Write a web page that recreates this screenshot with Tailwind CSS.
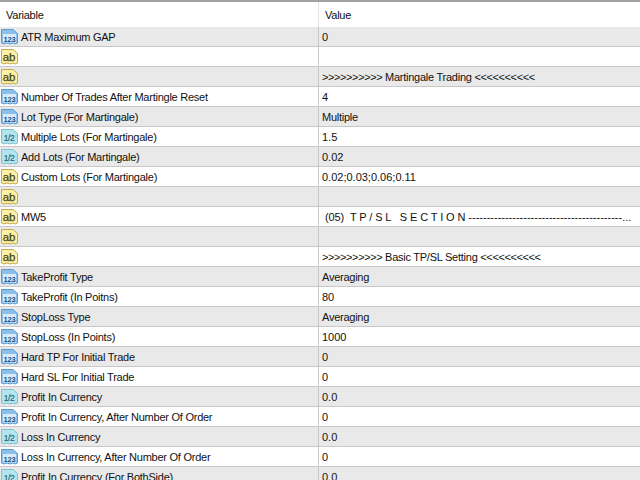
<!DOCTYPE html>
<html lang="en">
<head>
    <meta charset="UTF-8">
    <title>Inputs</title>
    <script src="https://cdn.jsdelivr.net/npm/@tailwindcss/browser@4"></script>
</head>
<body class="bg-white overflow-hidden">
    <svg class="hidden">
        <symbol id="i123" viewBox="0 0 17 16">
            <path d="M.5 .5 H12 L16.5 4.5 V14 L14 15 L12 14 L9 15 L6 14 L3 15 L.5 14Z" fill="#8cc0ea" stroke="#5b9bd0"/>
            <rect x="2" y="5" width="13" height="8.5" fill="#d8ebfa"/>
            <text x="8.5" y="12.5" text-anchor="middle" font-family="Liberation Sans" font-size="7.5" font-weight="700" fill="#17508c">123</text>
        </symbol>
        <symbol id="iab" viewBox="0 0 17 16">
            <path d="M.5 .5 H12 L16.5 4.5 V14 L14 15 L12 14 L9 15 L6 14 L3 15 L.5 14Z" fill="#fbf0a6" stroke="#c4ab4a"/>
            <text x="8" y="12" text-anchor="middle" font-family="Liberation Sans" font-size="11.5" fill="#4a4208" stroke="#4a4208" stroke-width=".25">ab</text>
        </symbol>
        <symbol id="ifr" viewBox="0 0 17 16">
            <path d="M.5 .5 H12 L16.5 4.5 V14 L14 15 L12 14 L9 15 L6 14 L3 15 L.5 14Z" fill="#b4e4ec" stroke="#7cc3d2"/>
            <text x="8" y="11.5" text-anchor="middle" font-family="Liberation Sans" font-size="8.5" letter-spacing="-.5" fill="#1c6c85" stroke="#1c6c85" stroke-width=".2">1/2</text>
        </symbol>
    </svg>

    <div class="font-['Liberation_Sans',sans-serif] text-[11px] tracking-[-0.25px] leading-[19px] text-[#111] h-[480px] overflow-hidden">
        <!-- Header -->
        <div class="flex h-[27px] border-t-2 border-[#a0a0a0] items-center">
            <div class="w-[319px] pl-[6px] pt-[2px] border-r border-[#e3e3e3] h-full flex items-center">Variable</div>
            <div class="pl-[6px] pt-[2px]">Value</div>
        </div>

        <div class="flex h-5 border-b border-[#c8c8c8] bg-[#e9e9e9]"><div class="w-[319px] flex items-center border-r border-[#c8c8c8]"><svg class="w-[17px] h-4 ml-[1px] mr-[3px]"><use href="#i123"/></svg><span class="pt-[2px]">ATR Maximum GAP</span></div><div class="pl-[3px] pt-px flex-1 tracking-normal">0</div></div>
        <div class="flex h-5 border-b border-[#c8c8c8] bg-white"><div class="w-[319px] flex items-center border-r border-[#c8c8c8]"><svg class="w-[17px] h-4 ml-[1px] mr-[3px]"><use href="#iab"/></svg></div><div class="pl-[3px] pt-px flex-1"></div></div>
        <div class="flex h-5 border-b border-[#c8c8c8] bg-[#e9e9e9]"><div class="w-[319px] flex items-center border-r border-[#c8c8c8]"><svg class="w-[17px] h-4 ml-[1px] mr-[3px]"><use href="#iab"/></svg></div><div class="pl-[3px] pt-px flex-1"><span class="tracking-[-0.4px]">&gt;&gt;&gt;&gt;&gt;&gt;&gt;&gt;&gt;&gt;</span> Martingale Trading <span class="tracking-[-0.4px]">&lt;&lt;&lt;&lt;&lt;&lt;&lt;&lt;&lt;&lt;</span></div></div>
        <div class="flex h-5 border-b border-[#c8c8c8] bg-white"><div class="w-[319px] flex items-center border-r border-[#c8c8c8]"><svg class="w-[17px] h-4 ml-[1px] mr-[3px]"><use href="#i123"/></svg><span class="pt-[2px]">Number Of Trades After Martingle Reset</span></div><div class="pl-[3px] pt-px flex-1 tracking-normal">4</div></div>
        <div class="flex h-5 border-b border-[#c8c8c8] bg-[#e9e9e9]"><div class="w-[319px] flex items-center border-r border-[#c8c8c8]"><svg class="w-[17px] h-4 ml-[1px] mr-[3px]"><use href="#i123"/></svg><span class="pt-[2px]">Lot Type (For Martingale)</span></div><div class="pl-[3px] pt-px flex-1">Multiple</div></div>
        <div class="flex h-5 border-b border-[#c8c8c8] bg-white"><div class="w-[319px] flex items-center border-r border-[#c8c8c8]"><svg class="w-[17px] h-4 ml-[1px] mr-[3px]"><use href="#ifr"/></svg><span class="pt-[2px]">Multiple Lots (For Martingale)</span></div><div class="pl-[3px] pt-px flex-1 tracking-normal">1.5</div></div>
        <div class="flex h-5 border-b border-[#c8c8c8] bg-[#e9e9e9]"><div class="w-[319px] flex items-center border-r border-[#c8c8c8]"><svg class="w-[17px] h-4 ml-[1px] mr-[3px]"><use href="#ifr"/></svg><span class="pt-[2px]">Add Lots (For Martingale)</span></div><div class="pl-[3px] pt-px flex-1 tracking-normal">0.02</div></div>
        <div class="flex h-5 border-b border-[#c8c8c8] bg-white"><div class="w-[319px] flex items-center border-r border-[#c8c8c8]"><svg class="w-[17px] h-4 ml-[1px] mr-[3px]"><use href="#iab"/></svg><span class="pt-[2px]">Custom Lots (For Martingale)</span></div><div class="pl-[3px] pt-px flex-1 tracking-normal">0.02;0.03;0.06;0.11</div></div>
        <div class="flex h-5 border-b border-[#c8c8c8] bg-[#e9e9e9]"><div class="w-[319px] flex items-center border-r border-[#c8c8c8]"><svg class="w-[17px] h-4 ml-[1px] mr-[3px]"><use href="#iab"/></svg></div><div class="pl-[3px] pt-px flex-1"></div></div>
        <div class="flex h-5 border-b border-[#c8c8c8] bg-white"><div class="w-[319px] flex items-center border-r border-[#c8c8c8]"><svg class="w-[17px] h-4 ml-[1px] mr-[3px]"><use href="#iab"/></svg><span class="pt-[2px]">MW5</span></div><div class="pl-[6px] pt-px flex-1 whitespace-pre"><span class="tracking-[-0.1px]">(05)  T P / S L   S E C T I O N </span><span class="tracking-normal">------------------------------------------...</span></div></div>
        <div class="flex h-5 border-b border-[#c8c8c8] bg-[#e9e9e9]"><div class="w-[319px] flex items-center border-r border-[#c8c8c8]"><svg class="w-[17px] h-4 ml-[1px] mr-[3px]"><use href="#iab"/></svg></div><div class="pl-[3px] pt-px flex-1"></div></div>
        <div class="flex h-5 border-b border-[#c8c8c8] bg-white"><div class="w-[319px] flex items-center border-r border-[#c8c8c8]"><svg class="w-[17px] h-4 ml-[1px] mr-[3px]"><use href="#iab"/></svg></div><div class="pl-[3px] pt-px flex-1"><span class="tracking-[-0.4px]">&gt;&gt;&gt;&gt;&gt;&gt;&gt;&gt;&gt;&gt;</span> Basic TP/SL Setting <span class="tracking-[-0.4px]">&lt;&lt;&lt;&lt;&lt;&lt;&lt;&lt;&lt;&lt;</span></div></div>
        <div class="flex h-5 border-b border-[#c8c8c8] bg-[#e9e9e9]"><div class="w-[319px] flex items-center border-r border-[#c8c8c8]"><svg class="w-[17px] h-4 ml-[1px] mr-[3px]"><use href="#i123"/></svg><span class="pt-[2px]">TakeProfit Type</span></div><div class="pl-[3px] pt-px flex-1">Averaging</div></div>
        <div class="flex h-5 border-b border-[#c8c8c8] bg-white"><div class="w-[319px] flex items-center border-r border-[#c8c8c8]"><svg class="w-[17px] h-4 ml-[1px] mr-[3px]"><use href="#i123"/></svg><span class="pt-[2px]">TakeProfit (In Poitns)</span></div><div class="pl-[3px] pt-px flex-1 tracking-normal">80</div></div>
        <div class="flex h-5 border-b border-[#c8c8c8] bg-[#e9e9e9]"><div class="w-[319px] flex items-center border-r border-[#c8c8c8]"><svg class="w-[17px] h-4 ml-[1px] mr-[3px]"><use href="#i123"/></svg><span class="pt-[2px]">StopLoss Type</span></div><div class="pl-[3px] pt-px flex-1">Averaging</div></div>
        <div class="flex h-5 border-b border-[#c8c8c8] bg-white"><div class="w-[319px] flex items-center border-r border-[#c8c8c8]"><svg class="w-[17px] h-4 ml-[1px] mr-[3px]"><use href="#i123"/></svg><span class="pt-[2px]">StopLoss (In Points)</span></div><div class="pl-[3px] pt-px flex-1 tracking-normal">1000</div></div>
        <div class="flex h-5 border-b border-[#c8c8c8] bg-[#e9e9e9]"><div class="w-[319px] flex items-center border-r border-[#c8c8c8]"><svg class="w-[17px] h-4 ml-[1px] mr-[3px]"><use href="#i123"/></svg><span class="pt-[2px]">Hard TP For Initial Trade</span></div><div class="pl-[3px] pt-px flex-1 tracking-normal">0</div></div>
        <div class="flex h-5 border-b border-[#c8c8c8] bg-white"><div class="w-[319px] flex items-center border-r border-[#c8c8c8]"><svg class="w-[17px] h-4 ml-[1px] mr-[3px]"><use href="#i123"/></svg><span class="pt-[2px]">Hard SL For Initial Trade</span></div><div class="pl-[3px] pt-px flex-1 tracking-normal">0</div></div>
        <div class="flex h-5 border-b border-[#c8c8c8] bg-[#e9e9e9]"><div class="w-[319px] flex items-center border-r border-[#c8c8c8]"><svg class="w-[17px] h-4 ml-[1px] mr-[3px]"><use href="#ifr"/></svg><span class="pt-[2px]">Profit In Currency</span></div><div class="pl-[3px] pt-px flex-1 tracking-normal">0.0</div></div>
        <div class="flex h-5 border-b border-[#c8c8c8] bg-white"><div class="w-[319px] flex items-center border-r border-[#c8c8c8]"><svg class="w-[17px] h-4 ml-[1px] mr-[3px]"><use href="#i123"/></svg><span class="pt-[2px]">Profit In Currency, After Number Of Order</span></div><div class="pl-[3px] pt-px flex-1 tracking-normal">0</div></div>
        <div class="flex h-5 border-b border-[#c8c8c8] bg-[#e9e9e9]"><div class="w-[319px] flex items-center border-r border-[#c8c8c8]"><svg class="w-[17px] h-4 ml-[1px] mr-[3px]"><use href="#ifr"/></svg><span class="pt-[2px]">Loss In Currency</span></div><div class="pl-[3px] pt-px flex-1 tracking-normal">0.0</div></div>
        <div class="flex h-5 border-b border-[#c8c8c8] bg-white"><div class="w-[319px] flex items-center border-r border-[#c8c8c8]"><svg class="w-[17px] h-4 ml-[1px] mr-[3px]"><use href="#i123"/></svg><span class="pt-[2px]">Loss In Currency, After Number Of Order</span></div><div class="pl-[3px] pt-px flex-1 tracking-normal">0</div></div>
        <div class="flex h-5 border-b border-[#c8c8c8] bg-[#e9e9e9]"><div class="w-[319px] flex items-center border-r border-[#c8c8c8]"><svg class="w-[17px] h-4 ml-[1px] mr-[3px]"><use href="#ifr"/></svg><span class="pt-[2px]">Profit In Currency (For BothSide)</span></div><div class="pl-[3px] pt-px flex-1 tracking-normal">0.0</div></div>
    </div>
</body>
</html>
